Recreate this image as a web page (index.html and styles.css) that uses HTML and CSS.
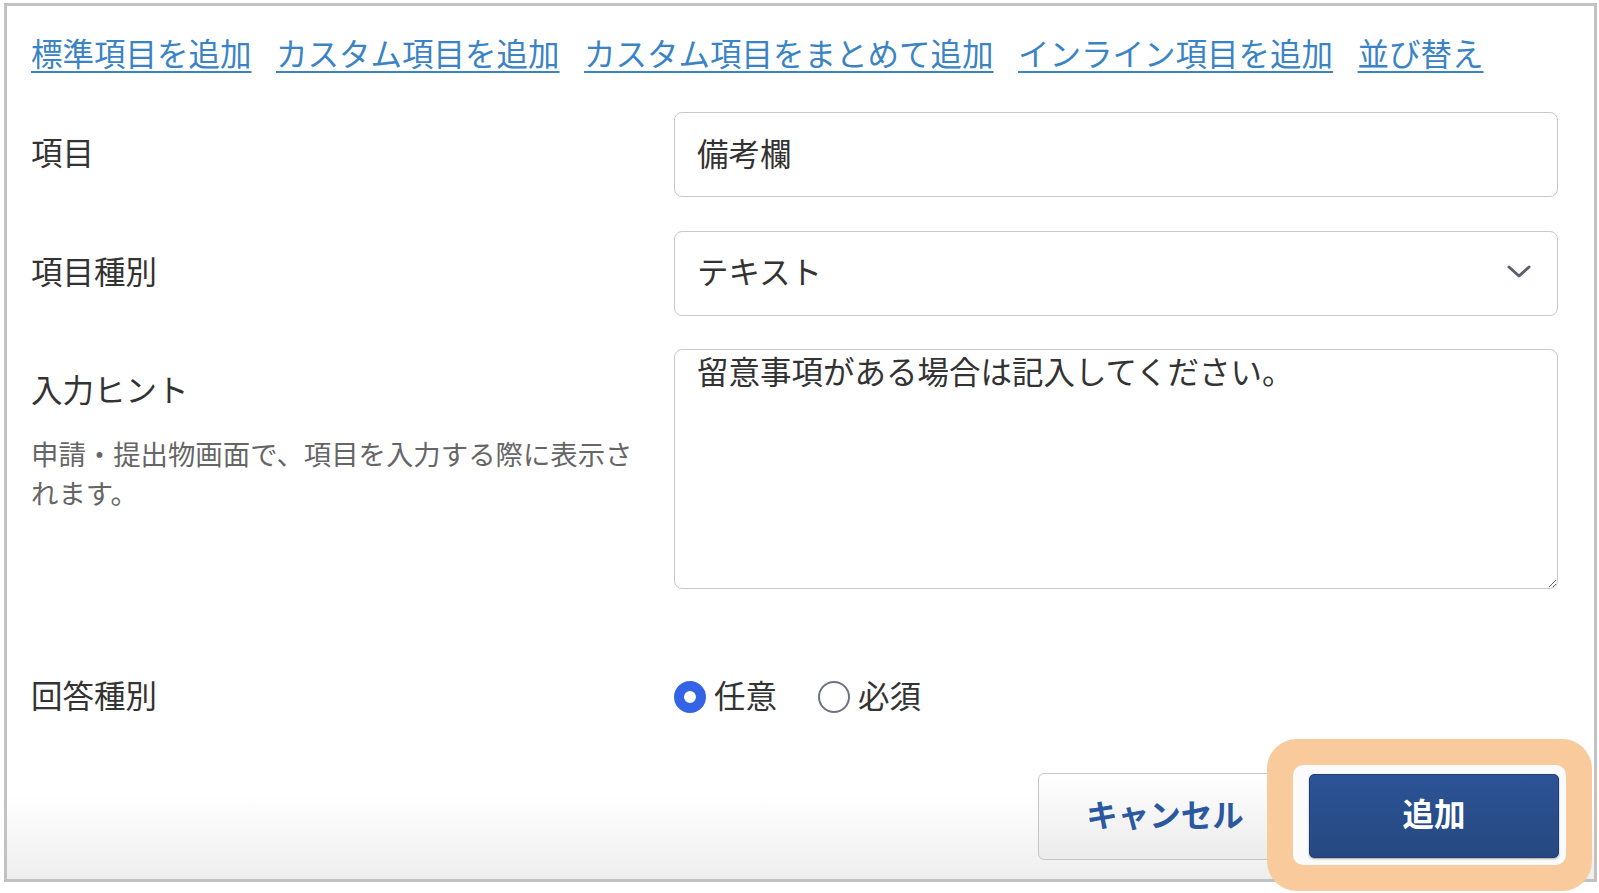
FILE: index.html
```html
<!DOCTYPE html>
<html lang="ja">
<head>
<meta charset="utf-8">
<title>項目を追加</title>
<link rel="stylesheet" href="styles.css">
</head>
<body>
<div class="panel">
  <div class="content">
    <nav class="links">
      <a href="#">標準項目を追加</a>
      <a href="#">カスタム項目を追加</a>
      <a href="#">カスタム項目をまとめて追加</a>
      <a href="#">インライン項目を追加</a>
      <a href="#">並び替え</a>
    </nav>

    <div class="row">
      <div class="label-col"><div class="label">項目</div></div>
      <div class="field-col"><input class="text-input" type="text" value="備考欄"></div>
    </div>

    <div class="row">
      <div class="label-col"><div class="label">項目種別</div></div>
      <div class="field-col">
        <div class="select-wrap">
          <select class="select"><option>テキスト</option></select>
          <svg class="chevron" width="24" height="14" viewBox="0 0 24 14"><path d="M2 2 L12 11 L22 2" fill="none" stroke="#5a616d" stroke-width="3" stroke-linecap="round" stroke-linejoin="round"/></svg>
        </div>
      </div>
    </div>

    <div class="row row-hint">
      <div class="label-col">
        <div class="label">入力ヒント</div>
        <p class="hint">申請・提出物画面で、項目を入力する際に表示されます。</p>
      </div>
      <div class="field-col"><textarea class="textarea">留意事項がある場合は記入してください。</textarea></div>
    </div>

    <div class="row row-radio">
      <div class="label-col"><div class="label">回答種別</div></div>
      <div class="field-col radios">
        <label class="radio-item"><input class="radio" type="radio" name="kind" checked><span>任意</span></label>
        <label class="radio-item"><input class="radio" type="radio" name="kind"><span>必須</span></label>
      </div>
    </div>
  </div>

  <div class="footer">
    <button class="btn btn-cancel" type="button">キャンセル</button>
    <span class="spotlight"><button class="btn btn-primary" type="button">追加</button></span>
  </div>
</div>
</body>
</html>
```

FILE: styles.css
```css
* { box-sizing: border-box; }

html, body {
  margin: 0;
  padding: 0;
  background: #ffffff;
}

body {
  font-family: "Noto Sans CJK JP", "Noto Sans", sans-serif;
  color: #333333;
  overflow: hidden;
  height: 893px;
}

.panel {
  margin: 3px 2px 0 4px;
  height: 879px;
  border: 3px solid #c2c2c2;
  display: flex;
  flex-direction: column;
  background: #ffffff;
}

.content {
  padding: 23.5px 36px 0 24px;
}

.links {
  display: flex;
  gap: 24.5px;
  font-size: 31.5px;
  line-height: 45px;
}

.links a {
  color: #3a84c5;
  text-decoration: underline;
  text-decoration-thickness: 2px;
  text-underline-offset: 5px;
}

.row {
  display: grid;
  grid-template-columns: 615px 1fr;
  column-gap: 28px;
  margin-top: 33.5px;
}

.row:first-of-type { margin-top: 37.5px; }

.label {
  padding-top: 17px;
  font-size: 31.5px;
  line-height: 45px;
}

.hint {
  margin: 23px 0 0;
  font-size: 27.4px;
  line-height: 39px;
  color: #666666;
}

.text-input,
.select,
.textarea {
  display: block;
  width: 100%;
  font-family: inherit;
  font-size: 31.5px;
  color: #333333;
  background: #ffffff;
  border: 1.5px solid #c9c9c9;
  border-radius: 8px;
  outline: none;
}

.text-input,
.select {
  height: 85px;
  padding: 0 22px 6px;
}

.select-wrap { position: relative; }

.select {
  appearance: none;
  -webkit-appearance: none;
}

.chevron {
  position: absolute;
  right: 27px;
  top: 34px;
  pointer-events: none;
}

.textarea {
  height: 240px;
  padding: 0 22px;
  line-height: 40px;
  resize: vertical;
}

.row-radio { margin-top: 65.5px; }

.radios {
  display: flex;
  align-items: center;
  height: 85px;
  gap: 41px;
}

.radio-item {
  display: flex;
  align-items: center;
  gap: 8px;
  font-size: 31.5px;
  line-height: 45px;
}

.radio-item span {
  margin-top: -5px;
}

.radio {
  appearance: none;
  -webkit-appearance: none;
  margin: 0;
  width: 32px;
  height: 32px;
  border-radius: 50%;
  border: 2px solid #6d7180;
  background: #ffffff;
}

.radio:checked {
  border: 10px solid #3563e6;
}

.footer {
  flex: 1;
  display: flex;
  justify-content: flex-end;
  align-items: flex-start;
  padding: 25px 28px 0 0;
  background: linear-gradient(to bottom, #ffffff 0%, #ffffff 40%, #eeeeee 100%);
}

.btn {
  font-family: inherit;
  font-weight: 700;
  font-size: 31.5px;
  cursor: pointer;
  padding: 0 0 7px;
}

.btn-cancel {
  margin-top: 8px;
  margin-right: 1px;
  width: 254px;
  height: 87px;
  color: #2b59a0;
  background: linear-gradient(to bottom, #ffffff, #ebebeb);
  border: 1.5px solid #c6c6c6;
  border-radius: 6px;
}

.spotlight {
  position: relative;
  z-index: 1;
  display: block;
  padding: 9px 7px 7px 16px;
  background: #fbfbfb;
  border-radius: 10px;
  box-shadow: 0 0 0 26px #f8ca9c;
}

.btn-primary {
  display: block;
  width: 250px;
  height: 84px;
  color: #ffffff;
  background: linear-gradient(to bottom, #2c5396, #25497f);
  border: 1px solid #1f3f72;
  border-radius: 5px;
  box-shadow: 0 1px 2px rgba(0, 0, 0, 0.35);
}
```
